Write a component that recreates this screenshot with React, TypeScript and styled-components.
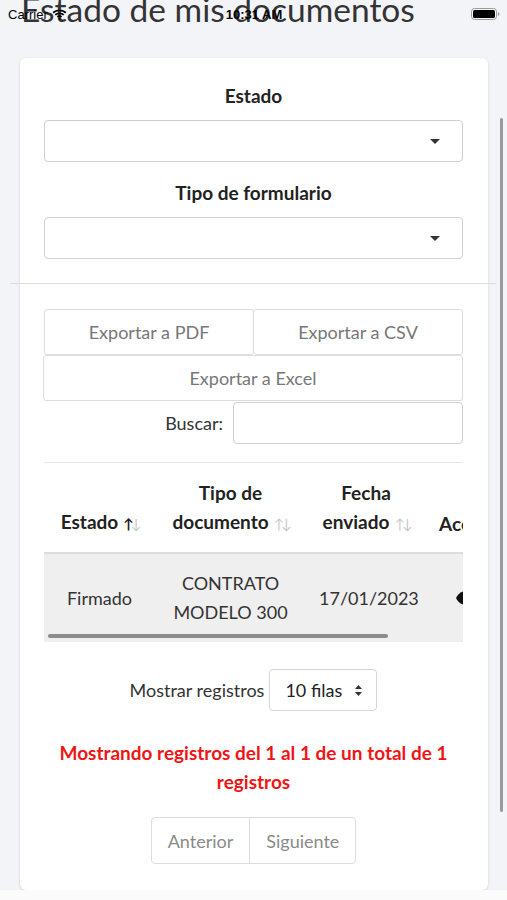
import React from "react";
import styled, { createGlobalStyle } from "styled-components";

const GlobalStyle = createGlobalStyle`
  html, body { margin: 0; padding: 0; background: #fbfbfc; }
  body { font-family: Lato, "Open Sans", sans-serif; color: #333; }
  * { box-sizing: border-box; }
`;

const Page = styled.div`
  position: relative;
  height: 890px;
  background: #f3f4f8;
  overflow: hidden;
`;

const StatusBar = styled.div`
  position: absolute;
  top: 0;
  left: 0;
  right: 0;
  height: 28px;
  padding: 0 7px 0 8px;
  display: flex;
  align-items: center;
  font-family: "Liberation Sans", Arial, sans-serif;
  font-size: 13px;
  color: #000;
  z-index: 2;
`;

const Carrier = styled.span`
  display: flex;
  align-items: center;
  gap: 4px;
  flex: 1;
`;

const Clock = styled.span`
  font-weight: 600;
  flex: 0 0 auto;
`;

const BatteryWrap = styled.span`
  flex: 1;
  display: flex;
  justify-content: flex-end;
`;

const Title = styled.h1`
  margin: -9px 0 30px 21px;
  font-size: 33.5px;
  line-height: 37px;
  font-weight: 400;
  color: #333;
  white-space: nowrap;
`;

const Card = styled.div`
  margin: 0 19px 0 20px;
  background: #fff;
  border-radius: 6px;
  box-shadow: 0 1px 3px rgba(0, 0, 0, 0.14);
  padding: 23px 25px 26px 24px;
  display: flex;
  flex-direction: column;
`;

const Label = styled.div`
  font-size: 19px;
  line-height: 29px;
  font-weight: 700;
  color: #222;
  text-align: center;
  margin-bottom: 10px;
`;

const SelectBox = styled.div<{ $gapBelow?: number }>`
  height: 42px;
  border: 1px solid #cfcfcf;
  border-radius: 4px;
  display: flex;
  align-items: center;
  justify-content: flex-end;
  padding-right: 22px;
  margin-bottom: ${(p) => p.$gapBelow ?? 0}px;
`;

const Caret = styled.span`
  width: 0;
  height: 0;
  border-left: 5px solid transparent;
  border-right: 5px solid transparent;
  border-top: 5px solid #333;
`;

const Rule = styled.hr`
  border: 0;
  border-top: 1px solid #dcdcdc;
  margin: 24px -33px 25px -34px;
`;

const ExportRow = styled.div`
  display: flex;
`;

const ExportButton = styled.button<{ $shift?: boolean }>`
  flex: 1;
  height: 46px;
  background: #fff;
  border: 1px solid #ddd;
  border-radius: 3px;
  font-family: inherit;
  font-size: 18px;
  color: #777;
  padding: 0;
  margin-left: ${(p) => (p.$shift ? "-1px" : "0")};
  & + & { margin-left: -1px; }
`;

const SearchRow = styled.div`
  display: flex;
  justify-content: flex-end;
  align-items: center;
  gap: 10px;
  margin-top: 1px;
`;

const SearchLabel = styled.span`
  font-size: 18px;
  color: #333;
`;

const SearchInput = styled.div`
  width: 230px;
  height: 42px;
  border: 1px solid #cfcfcf;
  border-radius: 4px;
`;

const TableWrap = styled.div`
  position: relative;
  margin-top: 18px;
  border-top: 1px solid #e6e6e6;
  overflow: hidden;
`;

const Table = styled.table`
  border-collapse: collapse;
  table-layout: fixed;
  width: 540px;
`;

const Th = styled.th`
  padding: 15px 13px 14px;
  font-size: 19px;
  line-height: 29px;
  font-weight: 700;
  color: #222;
  text-align: center;
  vertical-align: bottom;
  border-bottom: 2px solid #dcdcdc;
  white-space: nowrap;
`;

const Td = styled.td`
  padding: 15px 13px;
  font-size: 18px;
  line-height: 29px;
  color: #333;
  text-align: center;
  background: #efefef;
`;

const ActionTd = styled(Td)`
  text-align: left;
  padding-left: 30px;
`;

const Sort = styled.span`
  font-size: 14px;
  font-weight: 400;
  margin-left: 5px;
  letter-spacing: -3px;
`;

const Arrow = styled.span<{ $on?: boolean }>`
  color: ${(p) => (p.$on ? "#222" : "#c8c8c8")};
  font-weight: ${(p) => (p.$on ? 700 : 400)};
`;

const HScroll = styled.div`
  position: absolute;
  left: 4px;
  bottom: 4px;
  width: 340px;
  height: 4px;
  border-radius: 2px;
  background: #8c8c8c;
`;

const LengthRow = styled.div`
  margin-top: 27px;
  display: flex;
  justify-content: center;
  align-items: center;
  gap: 5px;
  font-size: 18px;
  color: #333;
`;

const LengthSelect = styled.div`
  width: 108px;
  height: 42px;
  border: 1px solid #d5d5d5;
  border-radius: 4px;
  display: flex;
  align-items: center;
  justify-content: space-between;
  padding: 0 13px 0 15px;
  color: #222;
`;

const Info = styled.div`
  margin-top: 27px;
  font-size: 19px;
  line-height: 29px;
  font-weight: 700;
  color: #f01515;
  text-align: center;
  padding: 0 10px;
`;

const Pager = styled.div`
  margin: 21px auto 0;
  display: flex;
  border: 1px solid #dcdcdc;
  border-radius: 4px;
`;

const PageButton = styled.span`
  height: 45px;
  padding: 0 16px;
  display: flex;
  align-items: center;
  font-size: 18px;
  color: #8a8a8a;
  & + & { border-left: 1px solid #dcdcdc; }
`;

const PageScroll = styled.div`
  position: absolute;
  left: 500px;
  top: 118px;
  width: 3px;
  height: 694px;
  border-radius: 2px;
  background: #9a9a9a;
  z-index: 3;
`;

const Wifi = () => (
  <svg width="15" height="11" viewBox="0 0 15 11">
    <path d="M7.5 2.2c2.2 0 4.2.8 5.7 2.2l1.2-1.3C12.6 1.4 10.2.4 7.5.4S2.4 1.4.6 3.1l1.2 1.3c1.5-1.4 3.5-2.2 5.7-2.2z" fill="#000" />
    <path d="M7.5 5.2c1.4 0 2.6.5 3.6 1.3l1.2-1.3C11 4.1 9.3 3.4 7.5 3.4S4 4.1 2.7 5.2l1.2 1.3c1-.8 2.2-1.3 3.6-1.3z" fill="#000" />
    <path d="M7.5 8.1c.6 0 1.1.2 1.5.5l1.2-1.3C9.5 6.7 8.5 6.3 7.5 6.3s-2 .4-2.7 1L6 8.6c.4-.3.9-.5 1.5-.5z" fill="#000" />
    <circle cx="7.5" cy="10" r="1" fill="#000" />
  </svg>
);

const Battery = () => (
  <svg width="29" height="12" viewBox="0 0 29 12">
    <rect x="0.5" y="0.5" width="25" height="11" rx="3" fill="none" stroke="#9a9a9a" />
    <rect x="2" y="2" width="22" height="8" rx="1.6" fill="#000" />
    <path d="M27 4v4c.8-.3 1.4-1.1 1.4-2s-.6-1.7-1.4-2z" fill="#9a9a9a" />
  </svg>
);

const Eye = () => (
  <svg width="20" height="14" viewBox="0 0 20 14">
    <path d="M10 0C5 0 1.5 3.5 0 7c1.5 3.5 5 7 10 7s8.5-3.5 10-7C18.5 3.5 15 0 10 0z" fill="#111" />
  </svg>
);

const UpDown = () => (
  <svg width="9" height="13" viewBox="0 0 9 13">
    <path d="M4.5 1 8 5H1z M4.5 12 1 8h7z" fill="#333" />
  </svg>
);

const SortIcon = ({ on }: { on?: boolean }) => (
  <Sort>
    <Arrow $on={on}>↑</Arrow>
    <Arrow>↓</Arrow>
  </Sort>
);

export default function App() {
  return (
    <>
      <GlobalStyle />
      <Page>
        <StatusBar>
          <Carrier>
            Carrier <Wifi />
          </Carrier>
          <Clock>10:31 AM</Clock>
          <BatteryWrap>
            <Battery />
          </BatteryWrap>
        </StatusBar>
        <PageScroll />
        <Title>Estado de mis documentos</Title>
        <Card>
          <Label>Estado</Label>
          <SelectBox $gapBelow={16}>
            <Caret />
          </SelectBox>
          <Label>Tipo de formulario</Label>
          <SelectBox>
            <Caret />
          </SelectBox>
          <Rule />
          <ExportRow>
            <ExportButton>Exportar a PDF</ExportButton>
            <ExportButton>Exportar a CSV</ExportButton>
          </ExportRow>
          <ExportRow>
            <ExportButton $shift>Exportar a Excel</ExportButton>
          </ExportRow>
          <SearchRow>
            <SearchLabel>Buscar:</SearchLabel>
            <SearchInput />
          </SearchRow>
          <TableWrap>
            <Table>
              <colgroup>
                <col style={{ width: 111 }} />
                <col style={{ width: 151 }} />
                <col style={{ width: 120 }} />
                <col style={{ width: 158 }} />
              </colgroup>
              <thead>
                <tr>
                  <Th>
                    Estado
                    <SortIcon on />
                  </Th>
                  <Th>
                    Tipo de
                    <br />
                    documento
                    <SortIcon />
                  </Th>
                  <Th>
                    Fecha
                    <br />
                    enviado
                    <SortIcon />
                  </Th>
                  <Th style={{ textAlign: "left" }}>Acciones</Th>
                </tr>
              </thead>
              <tbody>
                <tr>
                  <Td>Firmado</Td>
                  <Td>
                    CONTRATO
                    <br />
                    MODELO 300
                  </Td>
                  <Td>17/01/2023</Td>
                  <ActionTd>
                    <Eye />
                  </ActionTd>
                </tr>
              </tbody>
            </Table>
            <HScroll />
          </TableWrap>
          <LengthRow>
            Mostrar registros
            <LengthSelect>
              10 filas <UpDown />
            </LengthSelect>
          </LengthRow>
          <Info>Mostrando registros del 1 al 1 de un total de 1 registros</Info>
          <Pager>
            <PageButton>Anterior</PageButton>
            <PageButton>Siguiente</PageButton>
          </Pager>
        </Card>
      </Page>
    </>
  );
}
